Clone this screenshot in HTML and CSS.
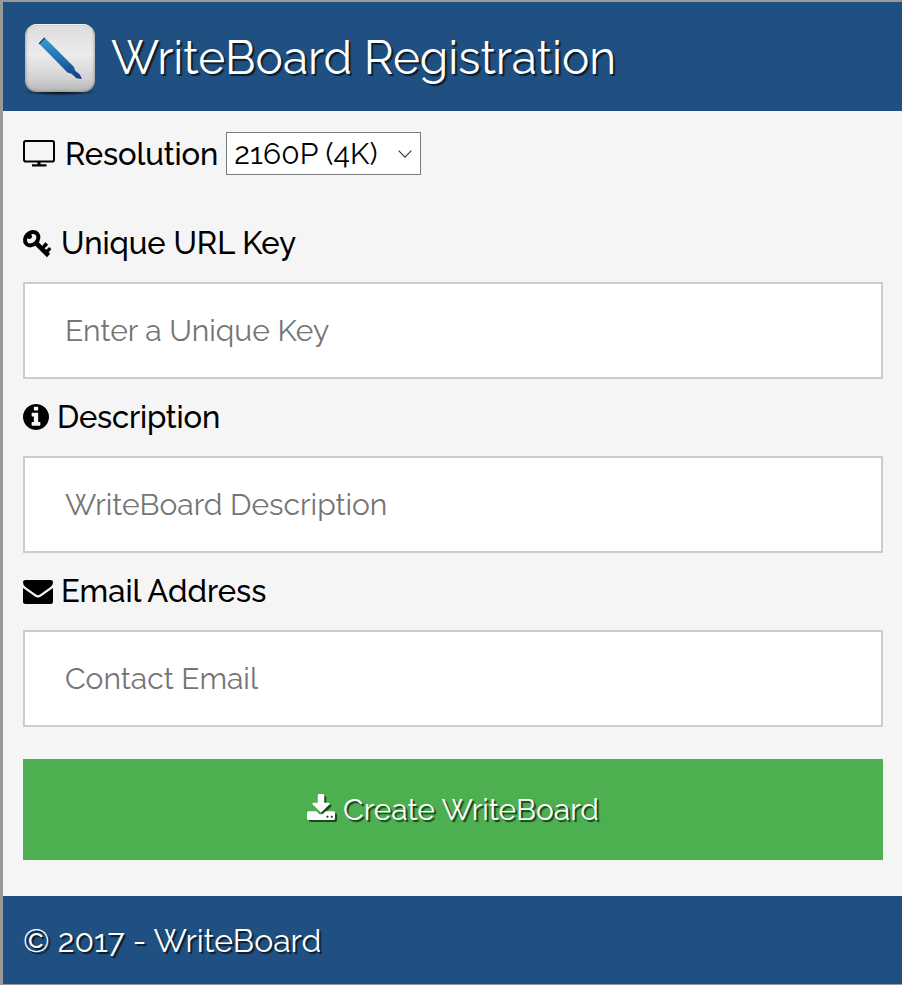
FILE: index.html
```
<!DOCTYPE html>
<html lang="en">
<head>
<meta charset="utf-8">
<title>WriteBoard Registration</title>
<link rel="stylesheet" href="styles.css">
</head>
<body>
<div class="window">
  <header class="header">
    <svg class="logo" viewBox="0 0 76 76" aria-hidden="true">
      <defs>
        <linearGradient id="tile" x1="0" y1="0" x2="0" y2="1">
          <stop offset="0" stop-color="#e2e2e2"/><stop offset=".1" stop-color="#e0e0e0"/><stop offset=".45" stop-color="#ececec"/><stop offset=".8" stop-color="#d2d2d2"/><stop offset="1" stop-color="#b4b4b4"/>
        </linearGradient>
        <linearGradient id="ink" x1="0" y1="0" x2="0" y2="1">
          <stop offset="0" stop-color="#3a9ad6"/><stop offset=".5" stop-color="#2470b4"/><stop offset="1" stop-color="#123a86"/>
        </linearGradient>
        <radialGradient id="shade"><stop offset="0" stop-color="#000" stop-opacity=".9"/><stop offset="1" stop-color="#000" stop-opacity="0"/></radialGradient>
        <filter id="soft"><feGaussianBlur stdDeviation="1.3"/></filter>
        <clipPath id="edge"><rect x="3" y="3" width="70" height="68" rx="12"/></clipPath>
      </defs>
      <ellipse cx="38" cy="71" rx="38" ry="4" fill="url(#shade)"/>
      <rect x="3" y="3" width="70" height="68" rx="12" fill="url(#tile)"/>
      <g clip-path="url(#edge)"><rect x="3" y="2.500" width="70" height="69" rx="12" fill="none" stroke="#777" stroke-opacity=".55" stroke-width="2.500" filter="url(#soft)"/></g>
      <path d="M6 9.500q2.500-6 9-6h46q6.500 0 9 6" fill="none" stroke="#f4f4f4" stroke-width="1"/>
      <path d="M22.500 16.500L52 46l1 3.500 4.800 4 2.200 4.500-5.500-.8-5-4.500-4-1.200L17 22.500z" fill="url(#ink)"/>
      <path d="M17 22.800l5.700-6" stroke="#12314a" stroke-width="1.200"/>
    </svg>
    <h1 class="title">WriteBoard Registration</h1>
  </header>

  <form class="form">
    <div class="resolution">
      <svg class="icon-screen" viewBox="0 0 32 27" aria-hidden="true"><rect x="1" y="1.100" width="30" height="20.500" rx="1.800" fill="none" stroke="currentColor" stroke-width="2"/><path d="M14.500 22h3v2.300H23.500V26.500H9V24.300h5.500z"/></svg>
      <span class="label-text">Resolution</span>
      <div class="select">
        <span>2160P (4K)</span>
        <svg class="chevron" viewBox="0 0 14 8" aria-hidden="true"><path d="M.6.7L7 7.100 13.400.7" fill="none" stroke="#333" stroke-width="1.100"/></svg>
      </div>
    </div>

    <label class="label label-key" for="key">
      <svg class="icon-key" viewBox="0 0 29 28" aria-hidden="true"><ellipse cx="8.700" cy="8.700" rx="7.400" ry="5.900" transform="rotate(-45 8.700 8.700)" fill="none" stroke="#000" stroke-width="4"/><circle cx="6.300" cy="6.300" r="2.600"/><path d="M13 13L25.500 25.500" stroke="#000" stroke-width="4.600"/><path d="M18.500 19l4.300-4.300M22.500 23l4.800-4.800M21.300 13.300l2.700 2.700" stroke="#000" stroke-width="3.200"/></svg>
      <span>Unique URL Key</span>
    </label>
    <input class="field" id="key" type="text" placeholder="Enter a Unique Key">

    <label class="label label-info" for="description">
      <svg class="icon-info" viewBox="128 128 1536 1536" aria-hidden="true"><path d="M1152 1376v-160q0-14-9-23t-23-9h-96v-512q0-14-9-23t-23-9h-320q-14 0-23 9t-9 23v160q0 14 9 23t23 9h96v320h-96q-14 0-23 9t-9 23v160q0 14 9 23t23 9h448q14 0 23-9t9-23zm-128-896v-160q0-14-9-23t-23-9h-192q-14 0-23 9t-9 23v160q0 14 9 23t23 9h192q14 0 23-9t9-23zm640 416q0 209-103 385.500t-279.500 279.500-385.500 103-385.500-103-279.500-279.500-103-385.500 103-385.500 279.500-279.500 385.500-103 385.500 103 279.500 279.500 103 385.500z"/></svg>
      <span>Description</span>
    </label>
    <input class="field" id="description" type="text" placeholder="WriteBoard Description">

    <label class="label label-mail" for="email">
      <svg class="icon-mail" viewBox="0 0 30 24" aria-hidden="true"><path d="M2.500 0h25Q30 0 30 2.300 30 5 27.500 7L17 14.500q-2 1.300-4 0L2.500 7Q0 5 0 2.300 0 0 2.500 0z"/><path d="M0 8L12 16.500q3 1.900 6 0L30 8V21.500Q30 24 27.500 24H2.500Q0 24 0 21.500z"/></svg>
      <span>Email Address</span>
    </label>
    <input class="field" id="email" type="text" placeholder="Contact Email">

    <button class="submit" type="button">
      <svg class="icon-save" viewBox="64 0 1664 1536" aria-hidden="true"><path d="M1344 1344q0-26-19-45t-45-19-45 19-19 45 19 45 45 19 45-19 19-45zm256 0q0-26-19-45t-45-19-45 19-19 45 19 45 45 19 45-19 19-45zm128-224v320q0 40-28 68t-68 28h-1472q-40 0-68-28t-28-68v-320q0-40 28-68t68-28h465l135 136q58 56 136 56t136-56l136-136h464q40 0 68 28t28 68zm-325-569q17 41-14 70l-448 448q-18 19-45 19t-45-19l-448-448q-31-29-14-70 17-39 59-39h256v-448q0-26 19-45t45-19h256q26 0 45 19t19 45v448h256q42 0 59 39z"/></svg>
      <span>Create WriteBoard</span>
    </button>
  </form>

  <footer class="footer">© 2017 - WriteBoard</footer>
</div>
</body>
</html>
```
FILE: styles.css
```
* {
  box-sizing: border-box;
}

body {
  margin: 0;
  font-family: Raleway, "Liberation Sans", sans-serif;
  color: #000;
}

.window {
  display: flex;
  flex-direction: column;
  height: 985px;
  border: solid #999;
  border-width: 2px 0 1px 3px;
  background: #f5f5f5;
}

.header {
  display: flex;
  align-items: center;
  height: 109px;
  padding: 2px 0 0 19px;
  background: #205081;
  color: #fff;
}

.logo {
  width: 76px;
  height: 76px;
  margin-top: 2px;
}

.title {
  margin: 0 0 0 13px;
  font-size: 46px;
  font-weight: 400;
  line-height: 54px;
  letter-spacing: -0.04px;
  text-shadow: 2px 2px 1px rgba(0, 0, 0, 0.65);
}

.form {
  flex: 1;
  padding: 21px 19px 0 20px;
}

.resolution {
  display: flex;
  align-items: center;
  height: 43px;
  margin-bottom: 47px;
}

.icon-screen {
  width: 32px;
  height: 27px;
  margin-right: 10px;
}

.label-text,
.label {
  font-size: 31px;
  font-weight: 500;
  line-height: 42px;
  letter-spacing: -0.1px;
}

.label span {
  padding-bottom: 2px;
}

.select {
  display: flex;
  align-items: center;
  justify-content: space-between;
  width: 195px;
  height: 43px;
  margin-left: 8px;
  padding: 0 8px 0 7px;
  border: 1px solid #7a7a7a;
  background: #fff;
  font-size: 30px;
  letter-spacing: 0.12px;
}

.chevron {
  width: 14px;
  height: 8px;
}

.label {
  display: flex;
  align-items: center;
  height: 44px;
  margin-bottom: 16px;
}

.label-key {
  letter-spacing: -0.03px;
}

.label-info {
  letter-spacing: -0.2px;
}

.label-mail {
  letter-spacing: 0;
}

.icon-key {
  width: 29px;
  height: 28px;
  margin: 0 9px 1px 0;
  overflow: visible;
}

.icon-info {
  width: 26px;
  height: 26px;
  margin: 0 8px 2px 0;
}

.icon-mail {
  width: 30px;
  height: 24px;
  margin-right: 8px;
}

.field {
  display: block;
  width: 860px;
  height: 97px;
  margin: 0 0 17px;
  padding: 0 40px;
  border: 2px solid #ccc;
  border-radius: 0;
  background: #fff;
  font: 400 30px Raleway, sans-serif;
}

.field::placeholder {
  color: #757575;
  opacity: 1;
}

.submit {
  display: flex;
  align-items: center;
  justify-content: center;
  width: 860px;
  height: 101px;
  margin-top: 32px;
  padding: 0;
  border: 0;
  background: #4caf50;
  color: #fff;
  font: 400 30px Raleway, sans-serif;
  text-shadow: 2px 2px 1px rgba(0, 0, 0, 0.65);
}

.icon-save {
  width: 28px;
  height: 26px;
  margin: 0 8px 5px 0;
  overflow: visible;
  fill: #fff;
  filter: drop-shadow(2px 2px 0.5px rgba(0, 0, 0, 0.6));
}

.footer {
  display: flex;
  align-items: center;
  height: 88px;
  padding: 0 0 0 20px;
  background: #205081;
  color: #fff;
  font-size: 32px;
  text-shadow: 2px 2px 1px rgba(0, 0, 0, 0.65);
}
```
